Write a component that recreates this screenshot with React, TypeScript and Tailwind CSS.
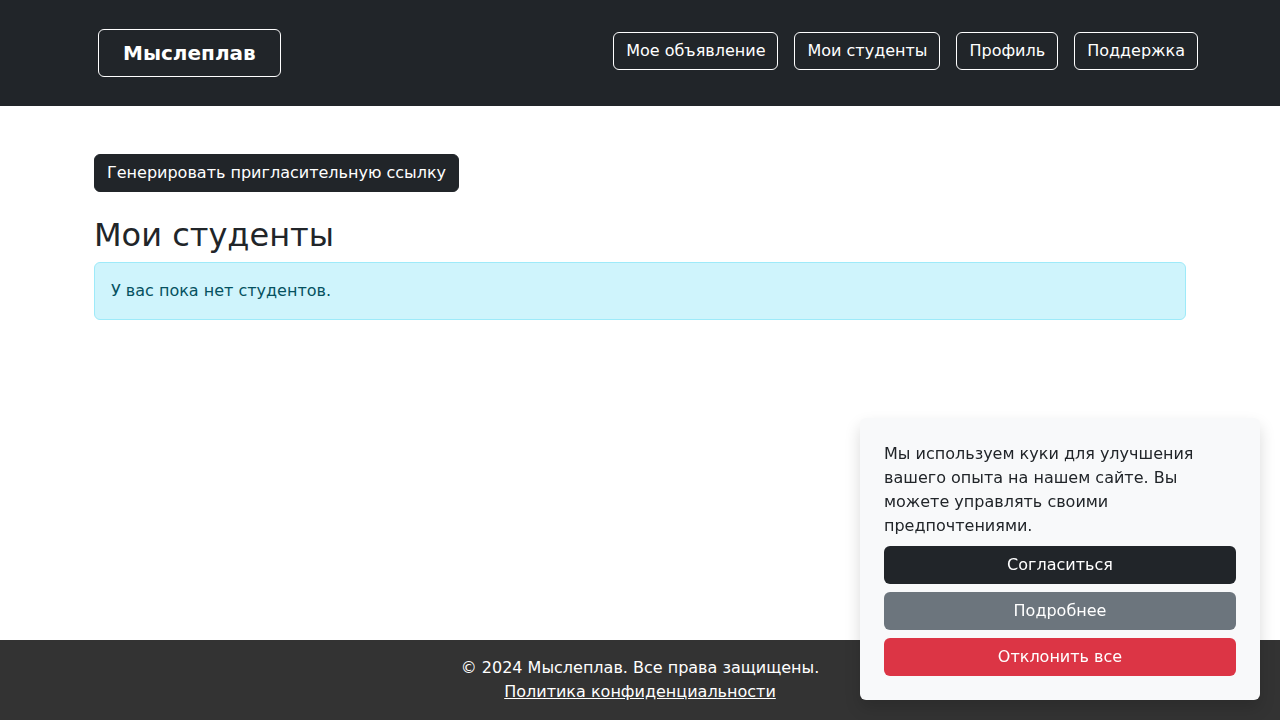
import React from "react";

export default function App() {
  const navItems = ["Мое объявление", "Мои студенты", "Профиль", "Поддержка"];
  return (
    <div
      className="min-h-screen flex flex-col bg-white text-[#212529] text-base leading-6"
      style={{ fontFamily: '"DejaVu Sans", sans-serif' }}
    >
      <header className="bg-[#212529] h-[106px] shrink-0">
        <div className="flex items-start justify-between pl-[98px] pr-[82px] pt-[29px]">
          <a className="border border-white rounded-[6px] px-6 py-2 text-xl leading-[30px] font-bold text-white">
            Мыслеплав
          </a>
          <nav className="flex gap-4 mt-[3px]">
            {navItems.map((t) => (
              <a
                key={t}
                className="border border-white rounded-[6px] px-3 py-[6px] text-white text-base leading-6"
              >
                {t}
              </a>
            ))}
          </nav>
        </div>
      </header>

      <main className="flex-1 px-[94px] pt-12">
        <button className="bg-[#212529] text-white rounded-[6px] px-3 py-[6px] text-base leading-6 border border-[#212529]">
          Генерировать пригласительную ссылку
        </button>
        <h2 className="text-[32px] leading-[38.4px] font-normal mt-[24px] mb-2">Мои студенты</h2>
        <div className="bg-[#cff4fc] border border-[#9eeaf9] text-[#055160] rounded-[6px] px-4 py-4">
          У вас пока нет студентов.
        </div>
      </main>

      <footer className="bg-[#333333] text-white text-center py-4 shrink-0">
        <p>© 2024 Мыслеплав. Все права защищены.</p>
        <a className="underline">Политика конфиденциальности</a>
      </footer>

      <div className="fixed right-5 bottom-5 w-[400px] bg-[#f8f9fa] rounded-[6px] p-6 shadow-[0_0.5rem_1rem_rgba(0,0,0,0.15)]">
        <p className="mb-2">
          Мы используем куки для улучшения вашего опыта на нашем сайте. Вы можете управлять своими
          предпочтениями.
        </p>
        <div className="flex flex-col gap-2">
          <button className="w-full bg-[#212529] text-white rounded-[6px] py-[7px] leading-6">
            Согласиться
          </button>
          <button className="w-full bg-[#6c757d] text-white rounded-[6px] py-[7px] leading-6">
            Подробнее
          </button>
          <button className="w-full bg-[#dc3545] text-white rounded-[6px] py-[7px] leading-6">
            Отклонить все
          </button>
        </div>
      </div>
    </div>
  );
}
